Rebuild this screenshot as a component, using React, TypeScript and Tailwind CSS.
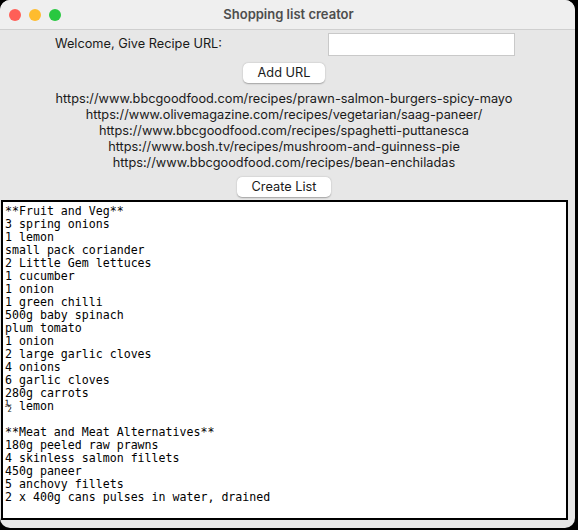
import React from "react";

const urls = [
  "https://www.bbcgoodfood.com/recipes/prawn-salmon-burgers-spicy-mayo",
  "https://www.olivemagazine.com/recipes/vegetarian/saag-paneer/",
  "https://www.bbcgoodfood.com/recipes/spaghetti-puttanesca",
  "https://www.bosh.tv/recipes/mushroom-and-guinness-pie",
  "https://www.bbcgoodfood.com/recipes/bean-enchiladas",
];

const list = `**Fruit and Veg**
3 spring onions
1 lemon
small pack coriander
2 Little Gem lettuces
1 cucumber
1 onion
1 green chilli
500g baby spinach
plum tomato
1 onion
2 large garlic cloves
4 onions
6 garlic cloves
280g carrots
½ lemon

**Meat and Meat Alternatives**
180g peeled raw prawns
4 skinless salmon fillets
450g paneer
5 anchovy fillets
2 x 400g cans pulses in water, drained`;

export default function App() {
  return (
    <div
      className="w-[578px] h-[530px] bg-black overflow-hidden"
      style={{ fontFamily: 'Inter, "Liberation Sans", Arial, sans-serif' }}
    >
      <div className="w-[575px] h-[528px] rounded-[10px] bg-[#e7e7e7] overflow-hidden flex flex-col">
        {/* title bar */}
        <div className="relative h-[30px] shrink-0 bg-[#efefef] border-b border-[#cfcfcf] flex items-center justify-center">
          <div className="absolute left-[9px] top-[9px] flex gap-[8px]">
            <span className="w-[12px] h-[12px] rounded-full bg-[#ff5f57]" />
            <span className="w-[12px] h-[12px] rounded-full bg-[#febc2e]" />
            <span className="w-[12px] h-[12px] rounded-full bg-[#28c840]" />
          </div>
          <span className="text-[13px] font-semibold text-[#4d4d4d] ml-[2px]">
            Shopping list creator
          </span>
        </div>

        {/* content */}
        <div className="w-[568px] flex flex-col">
          <div className="h-[27px] flex items-center text-[12.75px] text-[#1a1a1a]">
            <span className="ml-[55px] w-[273px]">Welcome, Give Recipe URL:</span>
            <div className="w-[187px] h-[23px] bg-white border border-[#c9c9c9] mt-[1px]" />
          </div>
          <div className="flex justify-center mt-[6px]">
            <button className="w-[82px] h-[20px] bg-white rounded-[5px] text-[12.75px] text-[#1a1a1a] shadow-[0_0.5px_1.5px_rgba(0,0,0,0.3)] leading-none">
              Add URL
            </button>
          </div>
          <div className="flex flex-col items-center mt-[8px] text-[12.75px] leading-[16px] text-[#1a1a1a]">
            {urls.map((u) => (
              <div key={u}>{u}</div>
            ))}
          </div>
          <div className="flex justify-center mt-[6px]">
            <button className="w-[94px] h-[20px] bg-white rounded-[5px] text-[12.75px] text-[#1a1a1a] shadow-[0_0.5px_1.5px_rgba(0,0,0,0.3)] leading-none">
              Create List
            </button>
          </div>
          <div className="ml-[1px] mt-[3px] w-[567px] h-[320px] border-2 border-black bg-white overflow-hidden">
            <pre
              className="m-0 pl-[2px] pt-[3px] text-[11.6px] leading-[13px] text-black whitespace-pre"
              style={{ fontFamily: '"DejaVu Sans Mono", monospace' }}
            >
              {list}
            </pre>
          </div>
        </div>
      </div>
    </div>
  );
}
